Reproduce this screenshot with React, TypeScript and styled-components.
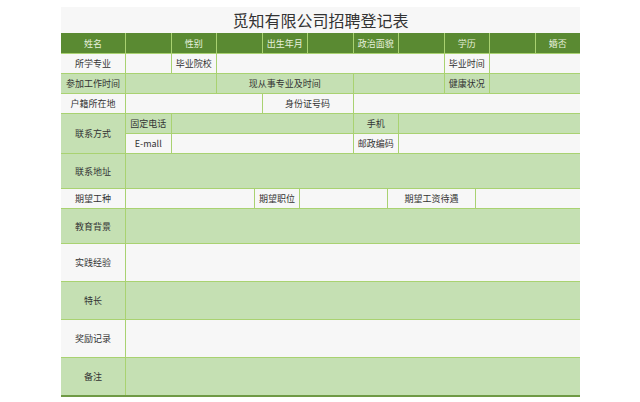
import React from "react";
import styled, { createGlobalStyle } from "styled-components";

const Global = createGlobalStyle`
  html, body { margin: 0; padding: 0; background: #fff; }
  body { font-family: "Microsoft YaHei", "Noto Sans CJK SC", sans-serif; }
`;

const Page = styled.div`
  width: 519px;
  margin: 7px 0 0 61px;
  background: #f7f7f7;
`;

const Title = styled.div`
  height: 26px;
  display: flex;
  align-items: center;
  justify-content: center;
  font-size: 16px;
  color: #333;
`;

const Table = styled.div`
  display: grid;
  grid-template-columns: 64px repeat(10, 1fr);
  grid-template-rows: 20px 19px 19px 19px 19px 19px 34px 19px 34px 37px 37px 37px 37px;
  gap: 1px;
  background: #a9d271;
  border-bottom: 2px solid #6f9a45;
`;

type Tone = "head" | "green" | "light";
const bg = { head: "#5a8a32", green: "#c5e0b3", light: "#f7f7f7" };

const Cell = styled.div<{ $tone: Tone; $span?: number; $rows?: number }>`
  background: ${(p) => bg[p.$tone]};
  color: ${(p) => (p.$tone === "head" ? "#e6f0dc" : "#333")};
  grid-column: span ${(p) => p.$span ?? 1};
  grid-row: span ${(p) => p.$rows ?? 1};
  display: flex;
  align-items: center;
  justify-content: center;
  font-size: 9px;
  white-space: nowrap;
`;

const SubRow = styled.div`
  grid-column: 2 / span 10;
  display: grid;
  grid-template-columns: 128px 44px 87px 87px 1fr;
  gap: 1px;
`;

const C = (t: Tone, text = "", span = 1, rows = 1) => (
  <Cell $tone={t} $span={span} $rows={rows}>{text}</Cell>
);

export default function App() {
  return (
    <>
      <Global />
      <Page>
        <Title>觅知有限公司招聘登记表</Title>
        <Table>
          {C("head", "姓名")}{C("head")}{C("head", "性别")}{C("head")}{C("head", "出生年月")}{C("head")}
          {C("head", "政治面貌")}{C("head")}{C("head", "学历")}{C("head")}{C("head", "婚否")}

          {C("light", "所学专业")}{C("light")}{C("light", "毕业院校")}{C("light", "", 5)}{C("light", "毕业时间")}{C("light", "", 2)}

          {C("green", "参加工作时间")}{C("green", "", 2)}{C("green", "现从事专业及时间", 3)}{C("green", "", 2)}{C("green", "健康状况")}{C("green", "", 2)}

          {C("light", "户籍所在地")}{C("light", "", 3)}{C("light", "身份证号码", 2)}{C("light", "", 5)}

          {C("green", "联系方式", 1, 2)}{C("green", "固定电话")}{C("green", "", 4)}{C("green", "手机")}{C("green", "", 4)}
          {C("light", "E-mall")}{C("light", "", 4)}{C("light", "邮政编码")}{C("light", "", 4)}

          {C("green", "联系地址")}{C("green", "", 10)}

          {C("light", "期望工种")}
          <SubRow>
            {C("light")}{C("light", "期望职位")}{C("light")}{C("light", "期望工资待遇")}{C("light")}
          </SubRow>

          {C("green", "教育背景")}{C("green", "", 10)}
          {C("light", "实践经验")}{C("light", "", 10)}
          {C("green", "特长")}{C("green", "", 10)}
          {C("light", "奖励记录")}{C("light", "", 10)}
          {C("green", "备注")}{C("green", "", 10)}
        </Table>
      </Page>
    </>
  );
}
